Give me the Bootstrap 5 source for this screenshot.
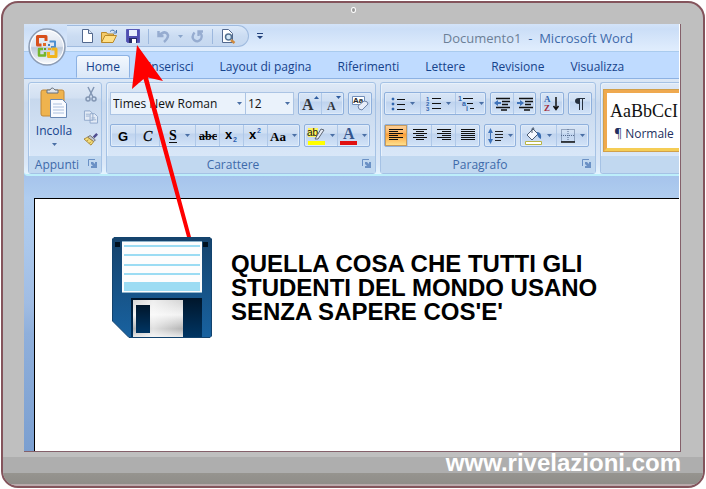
<!DOCTYPE html>
<html lang="it">
<head>
<meta charset="utf-8">
<meta name="viewport" content="width=device-width, initial-scale=1">
<title>Documento1 - Microsoft Word</title>
<link href="https://cdn.jsdelivr.net/npm/bootstrap@5.3.0/dist/css/bootstrap.min.css" rel="stylesheet">
<style>
body{font-family:"Open Sans","Noto Sans",sans-serif;font-size:12px;line-height:16px;color:#15428b;background:#fff;padding:3px 1px 1px 1px}
button{font:inherit;color:inherit;padding:0;border:0;background:none}
svg{display:block;flex:none;overflow:visible}
.monitor{min-height:calc(100vh - 2px);border:2px solid #84545c;border-radius:17px;background:#bfbfbf;overflow:hidden;margin-top:-2px}
.camera{height:21px}
.camera i{width:5px;height:6px;border:1px solid #fff;border-radius:50%;background:#999;margin-top:4px}
.screen{margin:0 22px 0 21px;border-right:1px solid #84606a;border-bottom:1px solid #84606a;background:linear-gradient(#a3c2ea,#a6c4ec 152px,#b0cdef 174px,#abc8ec 220px,#a0bce3 280px,#8fafdb 310px,#7b9fd0);box-shadow:inset -1px 0 #fff}
.brand{height:34px;background:linear-gradient(#bfbfbf 5px,#aeaeae 5px,#aeaeae 21px,#96948f 21px,#8f8d89 32px,#b9a9ab 32px);font:bold 24px/22px "Liberation Sans",Arial,sans-serif;color:#fff;padding-right:22px}
.brand a{color:#fff;text-decoration:none}
.titlebar{height:28px;background:linear-gradient(#d3e3f8,#cbdef7 5px,#dceafc 22px,#e0edfd);border-bottom:1px solid #a9cbee;margin-right:1px}
.office{width:38px;height:38px;margin:4px 0 0 4px;position:relative;z-index:2}
.quick{height:22px;margin:1px 0 0 1px;padding-left:15px;border:1px solid #a0bbdf;border-left:0;border-radius:0 12px 12px 0;background:linear-gradient(#dce9f9,#cbdcf2 50%,#c6d8f0)}
.quick .rule{width:1px;height:15px;background:#9db8de}
.doc-title{font-size:13px;color:#3e6aaa;padding-right:46px}
.doc-title span{color:#6c7f96}
.tabbar{height:27px;padding:3px 0 0 52px;background:#bfdbff;margin-right:1px;border:0;border-bottom:1px solid #8db2e3}
.tabbar .nav-link{font-size:12px;line-height:16px;color:#15428b;padding:3px 12px 4px;border:1px solid transparent;border-radius:3px 3px 0 0;margin:0}
.tabbar .nav-link.active{color:#15428b;background:linear-gradient(#f3f8fe,#dbe8f8);border-color:#8db2e3;border-bottom-color:#dbe8f8;padding:3px 9px 4px;margin-right:5px}
.ribbon{height:97px;padding:3px 0 1px 4px;background:linear-gradient(#dbe7f6,#cfdef0 20px,#c9d9ee 24px,#dbe8f8 85px,#e4f4ff);border-bottom:2px solid #bdeefa;border-radius:0 0 0 4px;margin-right:1px}
.group{height:92px;border:1px solid #a5c2e5;border-radius:3px;box-shadow:inset 1px 1px #e8f1fb;background:linear-gradient(#dfe9f6,#d2e0f2 15px,#c7d8ed 16px,#d9e7f8 73px)}
.gbody{height:73px;padding:9px 3px 0}
.glabel{height:17px;background:#c1d8f0;color:#3e6aaa;text-align:center;line-height:17px;padding-right:16px;position:relative}
.glabel button{position:absolute;right:4px;top:3px}
.second{margin-top:9px}
.tools{height:23px;border:1px solid #8fb0dc;border-radius:2px;background:linear-gradient(#d8e5f6,#cfdff3 8px,#bfd3ee 9px,#d2e3f8);box-shadow:inset 0 0 0 1px #dfebf9}
.tools button{height:21px;display:flex;align-items:center;justify-content:center;gap:5px;border-left:1px solid #afc8e8}
.tools button:first-child{border-left:0}
.w22{width:22px}.w24{width:24px}.w30{width:30px}.w32{width:32px}.w35{width:35px}.w36{width:36px}
.tools .on{background:linear-gradient(#fbd19d,#fdb663 8px,#fb9c36 9px,#ffe593);box-shadow:inset 0 0 0 1px #c69a5c}
.combo{appearance:none;height:23px;border:1px solid #abc4e4;border-radius:0;color:#111;padding:0 2px;font:12px/20px "Open Sans",sans-serif;background:#eaf2fb url("data:image/svg+xml,%3Csvg xmlns='http://www.w3.org/2000/svg' width='7' height='4'%3E%3Cpath d='M1 0h5L3.500 3z' fill='%234a6fa5'/%3E%3C/svg%3E") no-repeat right 2px center}
.face{width:136px}.points{width:49px;margin-right:4px;margin-left:-1px}
.paste{width:44px}
.sample{width:80px;height:61px;border:3px solid #efa94f;border-bottom-color:#f5cd55;background:#fff;box-shadow:0 0 0 1px #d1a04b;overflow:hidden;color:#223060;white-space:nowrap}
.sample b{font:18px/24px "Liberation Serif",serif;color:#111;display:block;margin-bottom:3px}
.group.styles{min-width:0;border-right:0;border-radius:3px 0 0 3px;overflow:hidden}
.styles .gbody{padding:7px 3px}
.sheet{margin:22px 1px 0 10px;border-top:1px solid #000;border-left:1px solid #000;background:#fff;padding:38px 40px 20px 77px;gap:19px}
.sheet h1{font:bold 24px/24px "Liberation Sans",Arial,sans-serif;color:#000;max-width:380px;margin:15px 0 0}
.pointer{left:130px;top:44px;z-index:5;pointer-events:none}
</style>
<script src="https://cdn.jsdelivr.net/npm/bootstrap@5.3.0/dist/js/bootstrap.bundle.min.js"></script>
</head>
<body>
<svg width="0" height="0" class="position-absolute" aria-hidden="true">
 <defs>
  <symbol id="dn" viewBox="0 0 5 3"><path d="M0 0h5L2.500 3z" fill="#4a6fa5"/></symbol>
  <symbol id="launch" viewBox="0 0 9 9"><path d="M.5 7V.5H7" fill="none" stroke="#6b91c5"/><path d="M3 3h2l2 2V3h2v6H3V7h2L3 5z" fill="#6b91c5"/></symbol>
  <linearGradient id="navy" x1="0" y1="0" x2="0" y2="1"><stop offset="0" stop-color="#16436c"/><stop offset="1" stop-color="#1862a0"/></linearGradient>
  <linearGradient id="dark" x1="0" y1="0" x2="0" y2="1"><stop offset="0" stop-color="#00162b"/><stop offset="1" stop-color="#003563"/></linearGradient>
  <linearGradient id="metal" x1="0" y1="0" x2="0" y2="1"><stop offset="0" stop-color="#d4d4d4"/><stop offset=".4" stop-color="#f2f2f2"/><stop offset=".78" stop-color="#b4b4b4"/><stop offset="1" stop-color="#e8e8e8"/></linearGradient>
  <linearGradient id="shine"><stop offset="0" stop-color="#fff" stop-opacity="0"/><stop offset=".4" stop-color="#fff" stop-opacity=".6"/><stop offset="1" stop-color="#fff" stop-opacity="0"/></linearGradient>
  <linearGradient id="orb" x1="0" y1="0" x2="0" y2="1"><stop offset="0" stop-color="#f7f9fc"/><stop offset=".48" stop-color="#dce3ee"/><stop offset=".52" stop-color="#bdc9da"/><stop offset="1" stop-color="#fdfeff"/></linearGradient>
 </defs>
</svg>
<div class="monitor d-flex flex-column">
 <div class="camera d-flex justify-content-center"><i></i></div>
 <main class="screen flex-grow-1 d-flex flex-column">
  <header class="titlebar d-flex align-items-start">
   <button class="office" aria-label="Pulsante Office"><svg width="38" height="38" viewBox="0 0 38 38"><circle cx="19" cy="19" r="18" fill="url(#orb)" stroke="#8d9db5" stroke-width="1.500"/><circle cx="19" cy="19" r="16.500" fill="none" stroke="#fff"/><g fill="none" stroke-linejoin="round"><path d="M13.500 17H9.500V8.500H18V13" stroke="#d8501b" stroke-width="3"/><path d="M21.500 13.500H27V19h-4" stroke="#4d8fd0" stroke-width="2"/><path d="M17 24v3.500h-6V21h4" stroke="#74b62b" stroke-width="2.500"/><path d="M20.500 24v4.500H28V21h-4.500" stroke="#f1b51c" stroke-width="3"/></g><path d="M15 15h3v3h-3z" fill="#e06a25"/><path d="M20 16h2v2h-2z" fill="#3b7fc4"/><path d="M16 20h2v2h-2z" fill="#5fa32a"/><path d="M20 20h3v2h-3z" fill="#e9a51a"/></svg></button>
   <div class="quick d-flex align-items-center">
    <button aria-label="Nuovo"><svg width="11" height="14" viewBox="0 0 11 14"><path d="M.5.5h6l4 4v9H.5z" fill="#fff" stroke="#52688e"/><path d="M6.500.5v4h4" fill="#dce6f4" stroke="#52688e"/></svg></button>
    <button class="ms-2" aria-label="Apri"><svg width="17" height="14" viewBox="0 0 17 14"><path d="M.5 13V3.500h5l1 1.500h6v3" fill="#f4ca68" stroke="#b98929"/><path d="M.5 13.500 4 6.500h11.500L12 13.500z" fill="#ffdf85" stroke="#b98929"/><path d="M9 2.500q3-3 5.500.5M15.500 1v3h-3" fill="none" stroke="#4574aa"/></svg></button>
    <button class="ms-2" aria-label="Salva"><svg width="14" height="14" viewBox="0 0 14 14"><path d="M.5.5h13v13h-12l-1-1z" fill="#504fb0" stroke="#5a5bb8"/><path d="M3 1h8v6H3z" fill="#e9effc"/><path d="M3 9h8v5H3z" fill="#272967"/><path d="M6 10h4v4H6z" fill="#fff"/></svg></button>
    <span class="rule ms-2 me-2"></span>
    <button class="d-flex align-items-center gap-2" aria-label="Annulla"><svg width="13" height="13" viewBox="0 0 13 13"><path d="M1.500 1v5h5M2 5.500Q7 .500 10 3.500t-3 8.500" fill="none" stroke="#96acd0" stroke-width="2.500"/></svg><svg width="5" height="3"><use href="#dn" opacity=".5"/></svg></button>
    <button class="ms-2" aria-label="Ripeti"><svg width="13" height="13" viewBox="0 0 13 13"><path d="M3.500 2.500Q0 7 3 10q4 3 7-1 2-4-1.500-6.500M7.500 6V1.500H12" fill="none" stroke="#96acd0" stroke-width="2.300"/></svg></button>
    <span class="rule ms-2 me-2"></span>
    <button class="me-2 pe-1" aria-label="Anteprima di stampa"><svg width="15" height="15" viewBox="0 0 15 15"><path d="M1.500.5h6l4 4v9h-10z" fill="#fff" stroke="#52688e"/><circle cx="7.500" cy="8" r="3" fill="#d5e9f8" stroke="#557292" stroke-width="1.500"/><path d="m10 11 3.500 3" stroke="#ce8a3f" stroke-width="2.500"/></svg></button>
   </div>
   <button class="ms-2 mt-2" aria-label="Personalizza"><svg width="6" height="8" viewBox="0 0 6 8"><path d="M0 1h6v1H0zM0 4h6L3 7z" fill="#24427c"/></svg></button>
   <div class="doc-title ms-auto align-self-center"><span>Documento1</span>&nbsp; - &nbsp;Microsoft Word</div>
  </header>
  <nav class="nav nav-tabs tabbar flex-nowrap" aria-label="Barra multifunzione">
   <a class="nav-link active" href="#home">Home</a><a class="nav-link" href="#ins">Inserisci</a><a class="nav-link text-nowrap" href="#lay">Layout di pagina</a><a class="nav-link" href="#rif">Riferimenti</a><a class="nav-link" href="#let">Lettere</a><a class="nav-link" href="#rev">Revisione</a><a class="nav-link" href="#vis">Visualizza</a>
  </nav>
  <div class="ribbon d-flex gap-1" id="home">
   <section class="group flex-shrink-0">
    <div class="gbody d-flex pt-1">
     <button class="paste d-flex flex-column align-items-center"><svg width="28" height="32" viewBox="0 0 28 32"><rect x="1" y="3" width="23" height="26" rx="2" fill="#efb34e" stroke="#c28837"/><path d="M7 6V3h3q2-4 5 0h3v3z" fill="#e1e4e8" stroke="#65707e"/><path d="M10.500 12.500h12l4 4v14h-16z" fill="#f9fbff" stroke="#6988b4"/><path d="M13 17h9m-9 3h11m-11 3h11m-11 3h11" stroke="#abc0df"/></svg><span class="mt-1">Incolla</span><svg class="mt-1" width="5" height="3"><use href="#dn"/></svg></button>
     <div class="d-flex flex-column align-items-center gap-2 ps-2">
      <button aria-label="Taglia"><svg width="12" height="15" viewBox="0 0 12 15"><path d="M3 0 8 10M9 0 4 10" stroke="#8397b4" stroke-width="1.500"/><g fill="none" stroke="#8397b4" stroke-width="1.500"><circle cx="3" cy="12" r="2"/><circle cx="9" cy="12" r="2"/></g></svg></button>
      <button aria-label="Copia"><svg width="14" height="14" viewBox="0 0 15 14"><path d="M.5.5h6l3 3v7h-9zM6.500 3.500h5l3 3v7h-8z" fill="#e3ebf6" stroke="#8fa7ca"/><path d="M2 4h4M2 6h4m2 2h4m-4 2h5" stroke="#9ab0d0"/></svg></button>
      <button aria-label="Copia formato"><svg width="14" height="14" viewBox="0 0 16 14"><path d="m10 4 4-4 2 2-4 4z" fill="#514f90"/><path d="m7 3 6 5-2 2-7-5z" fill="#c1c5cc" stroke="#666"/><path d="m4 5 7 5-3 4L0 7z" fill="#f6df7c" stroke="#a4802f"/><path d="m5 8-2 1m5 1-2 2" stroke="#a4802f"/></svg></button>
     </div>
    </div>
    <div class="glabel">Appunti<button aria-label="Finestra Appunti"><svg width="9" height="9"><use href="#launch"/></svg></button></div>
   </section>
   <section class="group flex-shrink-0">
    <div class="gbody">
     <div class="d-flex">
      <select class="combo face" aria-label="Tipo di carattere"><option>Times New Roman</option></select>
      <select class="combo points" aria-label="Dimensione"><option>12</option></select>
      <div class="tools d-flex me-1"><button class="w22" aria-label="Ingrandisci"><svg width="18" height="17" viewBox="0 0 18 17"><text x="1" y="15" font-family="Liberation Serif" font-weight="bold" font-size="16" fill="#30353d">A</text><path d="m13 4 2.500-3L18 4z" fill="#2f5c9e"/></svg></button><button class="w22" aria-label="Riduci"><svg width="18" height="17" viewBox="0 0 18 17"><text x="3" y="15" font-family="Liberation Serif" font-weight="bold" font-size="12" fill="#30353d">A</text><path d="m12 1 2.500 3L17 1z" fill="#2f5c9e"/></svg></button></div>
      <div class="tools d-flex"><button class="w22" aria-label="Cancella formattazione"><svg width="17" height="17" viewBox="0 0 17 17"><path d="M.5 1.500h12v8H.5z" fill="#fff" stroke="#718eb9"/><text x="1" y="8" font-family="Liberation Sans" font-weight="bold" font-size="8" fill="#222">Aa</text><path d="m6 11 6-5q4 0 4 3l-6 6q-4 0-4-4z" fill="#e7edf9" stroke="#6f83a7"/></svg></button></div>
     </div>
     <div class="d-flex gap-1 second">
      <div class="tools d-flex fw-bold text-black"><button class="w24" aria-label="Grassetto"><svg width="14" height="16"><text x="2" y="13" font-family="Liberation Sans" font-weight="bold" font-size="13">G</text></svg></button><button class="w24" aria-label="Corsivo"><svg width="14" height="16"><text x="2" y="13" font-family="Liberation Serif" font-style="italic" font-weight="normal" font-size="14" stroke="#000" stroke-width=".3">C</text></svg></button><button class="w36" aria-label="Sottolineato"><svg width="14" height="17"><text x="3" y="13" font-family="Liberation Serif" font-weight="bold" font-size="14">S</text><path d="M3 15.500h8" stroke="#111"/></svg><svg width="5" height="3"><use href="#dn"/></svg></button><button class="w24" aria-label="Barrato"><svg width="18" height="16"><text x="0" y="12" font-family="Liberation Serif" font-weight="bold" font-size="12">abc</text><path d="M0 8.500h18" stroke="#111"/></svg></button><button class="w24" aria-label="Pedice"><svg width="15" height="17"><text x="1" y="12" font-family="Liberation Sans" font-weight="bold" font-size="13">x</text><text x="9" y="15" font-family="Liberation Sans" font-weight="bold" font-size="7" fill="#2c5fb0">2</text></svg></button><button class="w24" aria-label="Apice"><svg width="15" height="17"><text x="1" y="12" font-family="Liberation Sans" font-weight="bold" font-size="13">x</text><text x="9" y="6" font-family="Liberation Sans" font-weight="bold" font-size="7" fill="#2c5fb0">2</text></svg></button><button class="w32" aria-label="Maiuscole"><svg width="17" height="16"><text x="0" y="13" font-family="Liberation Serif" font-weight="bold" font-size="13">Aa</text></svg><svg width="5" height="3"><use href="#dn"/></svg></button></div>
      <div class="tools d-flex"><button class="w32" aria-label="Evidenziatore"><svg width="18" height="18" viewBox="0 0 18 18"><path d="M1 1h10v9H1z" fill="#fff45d"/><text x="0" y="9" font-family="Liberation Sans" font-size="10" fill="#111">ab</text><path d="m8 12 6-10 3 1-6 9z" fill="#e5eaf4" stroke="#5c6572"/><path d="M1 14h17v4H1z" fill="#ff0"/></svg><svg width="5" height="3"><use href="#dn"/></svg></button><button class="w32" aria-label="Colore carattere"><svg width="17" height="18" viewBox="0 0 17 18"><text x="3" y="12" font-family="Liberation Serif" font-weight="bold" font-size="16" fill="#35568d">A</text><path d="M0 14h17v4H0z" fill="#e01010"/></svg><svg width="5" height="3"><use href="#dn"/></svg></button></div>
     </div>
    </div>
    <div class="glabel">Carattere<button aria-label="Finestra Carattere"><svg width="9" height="9"><use href="#launch"/></svg></button></div>
   </section>
   <section class="group flex-shrink-0">
    <div class="gbody">
     <div class="d-flex gap-1">
      <div class="tools d-flex"><button class="w35" aria-label="Elenco puntato"><svg width="14" height="14" viewBox="0 0 14 14"><path d="M1 1h2v2H1zM1 6h2v2H1zM1 11h2v2H1z" fill="#3265ad" stroke="#3265ad" stroke-width=".5"/><path d="M6 2.500h8M6 7.500h8M6 12.500h8" stroke="#111"/></svg><svg width="5" height="3"><use href="#dn"/></svg></button><button class="w35" aria-label="Elenco numerato"><svg width="15" height="15" viewBox="0 0 15 15"><g font-family="Liberation Sans" font-weight="bold" font-size="6" fill="#3265ad"><text y="5">1</text><text y="10">2</text><text y="15">3</text></g><path d="M6 2.500h9M6 7.500h9M6 12.500h9" stroke="#111"/></svg><svg width="5" height="3"><use href="#dn"/></svg></button><button class="w30" aria-label="Elenco a più livelli"><svg width="16" height="15" viewBox="0 0 16 15"><g font-family="Liberation Sans" font-weight="bold" font-size="7" fill="#3265ad"><text y="5">1</text><text x="4" y="10">a</text><text x="8" y="15">i</text></g><path d="M5 2.500h10M9 7.500h6M12 12.500h4" stroke="#111"/></svg><svg width="5" height="3"><use href="#dn"/></svg></button></div>
      <div class="tools d-flex"><button class="w22" aria-label="Riduci rientro"><svg width="16" height="14" viewBox="0 0 16 14"><path d="M2 1.500h14M8 4.500h8M8 7.500h6M2 10.500h14M7 13h6" stroke="#111" stroke-width="1.500"/><path d="m4 3-4 3 4 3V7h3V5H4z" fill="#3f73ba"/></svg></button><button class="w22" aria-label="Aumenta rientro"><svg width="16" height="14" viewBox="0 0 16 14"><path d="M2 1.500h14M8 4.500h8M8 7.500h6M2 10.500h14M7 13h6" stroke="#111" stroke-width="1.500"/><path d="m3 3 4 3-4 3V7H0V5h3z" fill="#3f73ba"/></svg></button></div>
      <div class="tools d-flex"><button class="w22" aria-label="Ordina"><svg width="16" height="17" viewBox="0 0 16 17"><g font-family="Liberation Serif" font-weight="bold" font-size="9"><text y="7" fill="#3265ad">A</text><text y="16" fill="#a22b3b">Z</text></g><path d="M12 2v12M9.500 11l2.500 3.500L14.500 11" fill="none" stroke="#111" stroke-width="1.500"/></svg></button></div>
      <div class="tools d-flex"><button class="w22" aria-label="Mostra tutto"><svg width="12" height="14" viewBox="0 0 12 14"><path d="M11 1H5Q1 1 1 4t4 3v6h1V2h2v11h1V2h2z" fill="#26303d"/></svg></button></div>
     </div>
     <div class="d-flex gap-1 second">
      <div class="tools d-flex"><button class="on w22" aria-label="Allinea a sinistra"><svg width="14" height="13" viewBox="0 0 14 13"><path d="M0 .5h14M0 2.500h9M0 4.500h14M0 6.500h9M0 8.500h14M0 10.500h9" stroke="#111"/></svg></button><button class="w24" aria-label="Centra"><svg width="14" height="13" viewBox="0 0 14 13"><path d="M0 .5h14M3 2.500h8M0 4.500h14M3 6.500h8M0 8.500h14M3 10.500h8" stroke="#111"/></svg></button><button class="w24" aria-label="Allinea a destra"><svg width="14" height="13" viewBox="0 0 14 13"><path d="M0 .5h14M5 2.500h9M0 4.500h14M5 6.500h9M0 8.500h14M5 10.500h9" stroke="#111"/></svg></button><button class="w24" aria-label="Giustifica"><svg width="14" height="13" viewBox="0 0 14 13"><path d="M0 .5h14M0 2.500h14M0 4.500h14M0 6.500h14M0 8.500h14M0 10.500h14" stroke="#111"/></svg></button></div>
      <div class="tools d-flex"><button class="w30" aria-label="Interlinea"><svg width="15" height="16" viewBox="0 0 15 16"><path d="M0 5 2.500 0 5 5H3v6h2l-2.500 5L0 11h2V5z" fill="#3f73ba"/><path d="M7 3.500h8M7 6.500h8M7 9.500h8M7 12.500h6" stroke="#222"/></svg><svg width="5" height="3"><use href="#dn"/></svg></button></div>
      <div class="tools d-flex"><button class="w35" aria-label="Sfondo"><svg width="17" height="18" viewBox="0 0 17 18"><path d="m2 8 6-6 5 5-6 6z" fill="#f5f8ff" stroke="#4b5a70"/><path d="M7 6V1.500q2-2 2 1" fill="none" stroke="#4b5a70"/><path d="M12 5q5 0 4 7-3-1-4-5z" fill="#3a6caf"/><path d="M.5 14.500h16v3H.5z" fill="#fff" stroke="#b8b447"/></svg><svg width="5" height="3"><use href="#dn"/></svg></button><button class="w32" aria-label="Bordi"><svg width="14" height="14" viewBox="0 0 14 14"><path d="M.5.500h13v12H.5zM7 0v12M0 6.500h14" fill="none" stroke="#556a8c" stroke-dasharray="1 1"/><path d="M0 13h14" stroke="#111" stroke-width="1.500"/></svg><svg width="5" height="3"><use href="#dn"/></svg></button></div>
     </div>
    </div>
    <div class="glabel">Paragrafo<button aria-label="Finestra Paragrafo"><svg width="9" height="9"><use href="#launch"/></svg></button></div>
   </section>
   <section class="group styles flex-grow-1">
    <div class="gbody d-flex"><button class="sample flex-shrink-0 d-block text-center"><b>AaBbCcI</b>¶ Normale</button></div>
    <div class="glabel"></div>
   </section>
  </div>
  <article class="sheet flex-grow-1 d-flex align-items-start">
   <svg width="100" height="101" viewBox="0 0 100 101" role="img" aria-label="Floppy disk"><path d="M2 .5h96l1.500 1.500v97L98 100.500H17L.5 84V2z" fill="url(#navy)" stroke="#12436e"/><path d="M3 5h5v5H3zM91 5h5v5h-5z" fill="#00101f"/><path d="M10 4h80v52H10z" fill="#fdfdfd"/><path d="M10 4.500h80M10 55.500h80" stroke="#8fb4cb"/><path d="M12 8h76v2H12zM12 17h76v2H12zM12 27h76v2H12zM12 36h76v2H12zM12 45h76v9H12z" fill="#9cdcf3"/><path d="M19 61h71v39H19z" fill="url(#dark)"/><path d="M21 63h50v37H21z" fill="url(#metal)"/><path d="M21 63h50v37H21z" fill="url(#shine)"/><path d="M24 68h14v28H24z" fill="url(#dark)"/></svg>
   <h1>QUELLA COSA CHE TUTTI GLI STUDENTI DEL MONDO USANO SENZA SAPERE COS'E'</h1>
  </article>
 </main>
 <footer class="brand text-end"><a href="#home">www.rivelazioni.com</a></footer>
</div>
<svg class="pointer position-absolute" width="66" height="196" viewBox="0 0 66 196" aria-hidden="true"><path d="M7 1 33 37 18 33.500 61 193H57L13.500 35 2 45z" fill="#f00"/></svg>
</body>
</html>
